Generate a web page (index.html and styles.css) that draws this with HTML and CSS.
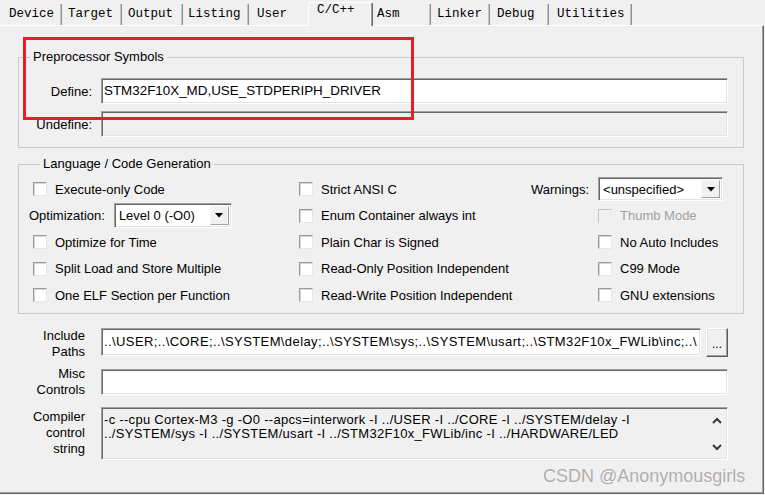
FILE: index.html
```html
<!DOCTYPE html>
<html>
<head>
<meta charset="utf-8">
<link rel="stylesheet" href="styles.css">
</head>
<body>
<div class="window">
  <div class="tabs">
    <div class="tab">Device</div>
    <div class="tab">Target</div>
    <div class="tab">Output</div>
    <div class="tab">Listing</div>
    <div class="tab">User</div>
    <div class="tab tab-active">C/C++</div>
    <div class="tab">Asm</div>
    <div class="tab">Linker</div>
    <div class="tab">Debug</div>
    <div class="tab">Utilities</div>
  </div>
  <div class="panel">
    <fieldset class="group group-pre">
      <legend>Preprocessor Symbols</legend>
      <div class="field-row">
        <span class="field-label">Define:</span>
        <div class="input define">STM32F10X_MD,USE_STDPERIPH_DRIVER</div>
      </div>
      <div class="field-row">
        <span class="field-label">Undefine:</span>
        <div class="input disabled"></div>
      </div>
    </fieldset>

    <fieldset class="group group-lang">
      <legend>Language / Code Generation</legend>
      <div class="lang-grid">
        <label class="check c1"><span class="cb"></span>Execute-only Code</label>
        <label class="check c2"><span class="cb"></span>Strict ANSI C</label>
        <div class="combo-row warn-row">
          <span class="combo-label">Warnings:</span>
          <div class="select sel-warn"><span class="select-value">&lt;unspecified&gt;</span><span class="select-btn"><svg width="8" height="5" viewBox="0 0 8 5"><path d="M0 0H8L4 4.5Z" fill="#000"/></svg></span></div>
        </div>

        <div class="combo-row opt-row">
          <span class="combo-label">Optimization:</span>
          <div class="select sel-opt"><span class="select-value">Level 0 (-O0)</span><span class="select-btn"><svg width="8" height="5" viewBox="0 0 8 5"><path d="M0 0H8L4 4.5Z" fill="#000"/></svg></span></div>
        </div>
        <label class="check c2"><span class="cb"></span>Enum Container always int</label>
        <label class="check c3 is-disabled"><span class="cb"></span>Thumb Mode</label>

        <label class="check c1"><span class="cb"></span>Optimize for Time</label>
        <label class="check c2"><span class="cb"></span>Plain Char is Signed</label>
        <label class="check c3"><span class="cb"></span>No Auto Includes</label>

        <label class="check c1"><span class="cb"></span>Split Load and Store Multiple</label>
        <label class="check c2"><span class="cb"></span>Read-Only Position Independent</label>
        <label class="check c3"><span class="cb"></span>C99 Mode</label>

        <label class="check c1"><span class="cb"></span>One ELF Section per Function</label>
        <label class="check c2"><span class="cb"></span>Read-Write Position Independent</label>
        <label class="check c3"><span class="cb"></span>GNU extensions</label>
      </div>
    </fieldset>

    <div class="extras">
      <div class="side-label include-label">Include<br>Paths</div>
      <div class="path-row">
        <div class="input path">..\USER;..\CORE;..\SYSTEM\delay;..\SYSTEM\sys;..\SYSTEM\usart;..\STM32F10x_FWLib\inc;..\</div>
        <div class="browse">...</div>
      </div>

      <div class="side-label">Misc<br>Controls</div>
      <div class="input misc"></div>

      <div class="side-label">Compiler<br>control<br>string</div>
      <div class="input disabled multiline">
        <div class="ctl-text">-c --cpu Cortex-M3 -g -O0 --apcs=interwork -I ../USER -I ../CORE -I ../SYSTEM/delay -I<br>../SYSTEM/sys -I ../SYSTEM/usart -I ../STM32F10x_FWLib/inc -I ../HARDWARE/LED</div>
        <div class="scroll">
          <svg width="10" height="7" viewBox="0 0 10 7"><path d="M1 6L5 2L9 6" fill="none" stroke="#3a3a3a" stroke-width="2"/></svg>
          <svg width="10" height="7" viewBox="0 0 10 7"><path d="M1 1L5 5L9 1" fill="none" stroke="#3a3a3a" stroke-width="2"/></svg>
        </div>
      </div>
    </div>
  </div>

  <div class="highlight"></div>
  <div class="watermark">CSDN @Anonymousgirls</div>
</div>
</body>
</html>
```
FILE: styles.css
```css
* { box-sizing: border-box; }
html, body { margin: 0; padding: 0; }
body {
  background: #f0f0f0;
  font-family: "Liberation Sans", Arial, sans-serif;
  font-size: 13px;
  color: #000;
  width: 765px;
  height: 495px;
  overflow: hidden;
}
.window { position: relative; width: 765px; height: 495px; }

/* ---------- tabs ---------- */
.tabs { display: flex; align-items: flex-end; height: 25px; }
.tab {
  height: 21px;
  line-height: 20px;
  font-family: "Liberation Mono", "DejaVu Sans Mono", monospace;
  font-size: 12.5px;
  padding-left: 6px;
  border-right: 1px solid #8e8e8e;
  box-shadow: inset -1px 0 0 #c4c4c4;
  white-space: nowrap;
}
.tab:nth-child(1) { width: 62px; padding-left: 9px; }
.tab:nth-child(2) { width: 60px; padding-left: 6px; }
.tab:nth-child(3) { width: 61px; padding-left: 6px; }
.tab:nth-child(4) { width: 66px; padding-left: 5px; }
.tab:nth-child(5) { width: 59px; padding-left: 8px; border-right: none; box-shadow: none; }
.tab:nth-child(7) { width: 58px; padding-left: 4px; }
.tab:nth-child(8) { width: 59px; padding-left: 6px; }
.tab:nth-child(9) { width: 59px; padding-left: 7px; }
.tab:nth-child(10) { width: 83px; padding-left: 8px; }
.tab-active {
  position: relative;
  z-index: 1;
  width: 65px;
  height: 24px;
  margin-bottom: -1px;
  line-height: 15px;
  padding-left: 8px;
  background: #f0f0f0;
  border-top: 1px solid #fff;
  border-left: 1px solid #fff;
  border-right: 1px solid #696969;
  box-shadow: inset -1px 0 0 #a0a0a0;
  border-radius: 2px 2px 0 0;
}

/* ---------- panel ---------- */
.panel {
  width: 764px;
  height: 469px;
  border-top: 1px solid #fff;
  border-right: 1px solid #696969;
  border-bottom: 1px solid #696969;
  box-shadow: inset -1px -1px 0 #a0a0a0;
  padding: 23px 0 0 18px;
}

.group {
  margin: 0;
  width: 726px;
  border: 1px solid #c9c9c9;
  padding: 0;
}
.group legend {
  margin-left: 11px;
  padding: 0 3px;
  line-height: 16px;
}
.group-pre { padding: 13px 0 10px 0; }
.group-lang { margin-top: 8px; padding: 4px 0 4px 10px; }

.field-row { display: flex; align-items: center; height: 26px; }
.field-row + .field-row { margin-top: 7px; }
.field-label { width: 73px; margin-right: 9px; text-align: right; }

.input {
  width: 627px;
  height: 26px;
  background: #fff;
  border: 1px solid;
  border-color: #a0a0a0 #fff #fff #a0a0a0;
  box-shadow: inset 1px 1px 0 #696969, inset -1px -1px 0 #e3e3e3;
  padding: 0 2px;
  line-height: 24px;
  white-space: nowrap;
  overflow: hidden;
}
.input.disabled { background: #f0f0f0; }
.define { font-size: 13.4px; }

/* ---------- language grid ---------- */
.lang-grid {
  display: grid;
  grid-template-columns: 270px 231px 1fr;
  grid-auto-rows: 26.5px;
  align-items: center;
}
.check { display: flex; align-items: center; gap: 8px; white-space: nowrap; }
.check.c1 { margin-left: 4px; }
.check.c3 { margin-left: 68px; }
.cb {
  width: 14px;
  height: 14px;
  flex: none;
  background: #fff;
  border: 1px solid;
  border-color: #9a9a9a #e6e6e6 #e6e6e6 #9a9a9a;
  box-shadow: inset 1px 1px 0 #d6d6d6;
}
.check.is-disabled { color: #a0a0a0; }
.check.is-disabled .cb { background: #f0f0f0; border-color: #c4c4c4 #ececec #ececec #c4c4c4; box-shadow: none; }

.combo-row { display: flex; align-items: center; }
.warn-row { margin-left: 1px; gap: 9px; }
.opt-row { gap: 9px; }

.select {
  display: flex;
  background: #fff;
  border: 1px solid;
  border-color: #a0a0a0 #fff #fff #a0a0a0;
  box-shadow: inset 1px 1px 0 #696969, inset -1px -1px 0 #e3e3e3;
  padding: 2px;
}
.sel-opt { width: 118px; height: 25px; }
.sel-warn { width: 125px; height: 24px; }
.select-value { flex: 1; padding-left: 2px; line-height: 19px; white-space: nowrap; overflow: hidden; }
.select-btn {
  width: 19px;
  display: flex;
  align-items: center;
  justify-content: center;
  background: #f0f0f0;
  border: 1px solid;
  border-color: #f8f8f8 #a0a0a0 #a0a0a0 #f8f8f8;
}

/* ---------- bottom fields ---------- */
.extras {
  display: grid;
  grid-template-columns: 67px 627px;
  grid-template-rows: 29px 26px 53px;
  column-gap: 16px;
  row-gap: 12px;
  margin-top: 14px;
}
.side-label { text-align: right; line-height: 16px; align-self: center; }
.include-label { padding-top: 3px; }
.path-row { display: flex; gap: 5px; }
.input.path { width: 602px; height: 28px; line-height: 26px; letter-spacing: 0.4px; }
.browse {
  width: 22px;
  height: 29px;
  flex: none;
  background: #f0f0f0;
  border: 1px solid;
  border-color: #fff #5a5a5a #5a5a5a #fff;
  box-shadow: inset -1px -1px 0 #a0a0a0, inset 1px 1px 0 #e3e3e3;
  text-align: center;
  line-height: 30px;
  font-size: 12px;
}
.input.multiline {
  height: 53px;
  display: flex;
  white-space: normal;
  padding: 5px 2px 0 2px;
}
.ctl-text { flex: 1; line-height: 14px; white-space: nowrap; letter-spacing: 0.3px; }
.scroll {
  width: 16px;
  display: flex;
  flex-direction: column;
  align-items: center;
  justify-content: space-between;
  margin-top: -5px;
  padding: 9px 0 8px;
}
.scroll svg { display: block; }

/* ---------- overlays ---------- */
.highlight {
  position: absolute;
  left: 23px;
  top: 37px;
  width: 391px;
  height: 83px;
  border: 3px solid #ec1c24;
}
.watermark {
  position: absolute;
  left: 543px;
  top: 465px;
  font-size: 18px;
  line-height: 22px;
  color: #adadad;
  text-shadow: 0 0 1px #fff;
  white-space: nowrap;
}
```
